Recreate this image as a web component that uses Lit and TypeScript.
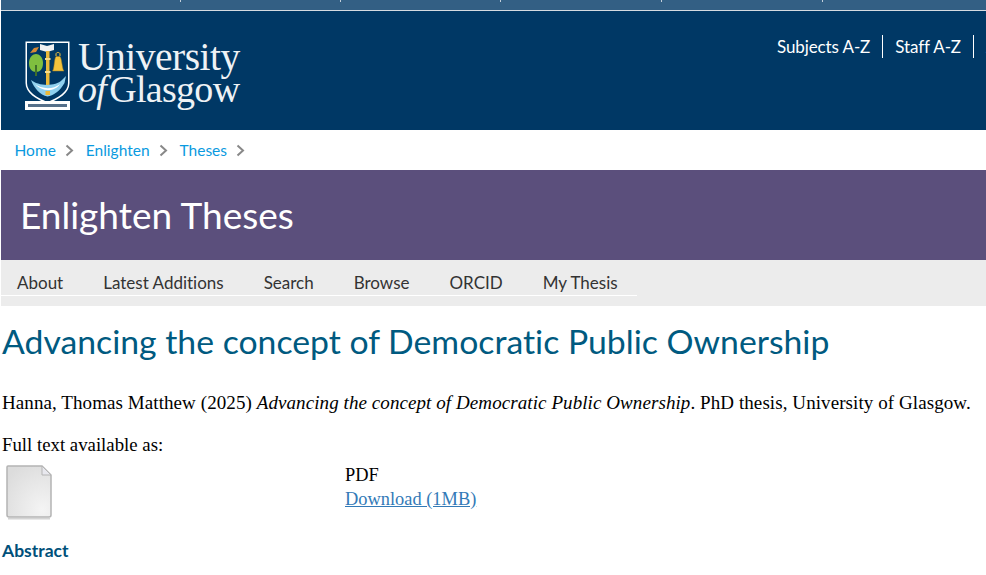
import { LitElement, html, css } from 'lit';
import { customElement } from 'lit/decorators.js';

const crumbs = ['Home', 'Enlighten', 'Theses'];
const navItems = ['About', 'Latest Additions', 'Search', 'Browse', 'ORCID', 'My Thesis'];

@customElement('app-root')
export class AppRoot extends LitElement {
  static styles = css`
    :host {
      display: block;
      height: 575px;
      overflow: hidden;
      background: #fff;
      font-family: 'Liberation Serif', serif;
      color: #000;
    }
    .strip {
      display: grid;
      grid-template-columns: 180px 160px 160px 161px 161px 1fr;
      height: 10px;
      margin-left: 1px;
      background: #335f84;
      border-bottom: 1px solid #d5dbe1;
    }
    .strip span {
      border-right: 1px solid #c3cfda;
      height: 2px;
    }
    .strip span:last-child {
      border-right: none;
    }
    .masthead {
      display: flex;
      justify-content: space-between;
      height: 119px;
      margin-left: 1px;
      background: #003865;
      color: #fff;
    }
    .logo {
      display: flex;
      align-items: flex-start;
      gap: 7px;
      padding: 30px 0 0 24px;
    }
    .wordmark {
      font-size: 39.5px;
      line-height: 33px;
      letter-spacing: -0.5px;
      color: #eef2f5;
    }
    .wordmark .second {
      margin-top: -1px;
      font-size: 38px;
      letter-spacing: -0.7px;
    }
    .wordmark i {
      margin-right: 3px;
    }
    .links {
      display: flex;
      align-items: flex-start;
      flex: none;
      width: 221px;
      padding-top: 24px;
      overflow: hidden;
      font: 17px/23px Lato, sans-serif;
      letter-spacing: -0.1px;
      white-space: nowrap;
    }
    .links span {
      padding: 0 12px;
      border-right: 1px solid #fff;
    }
    .links span:last-child {
      border-right: none;
    }
    .crumbs {
      display: flex;
      align-items: center;
      height: 40px;
      padding-left: 14.500px;
      font: 15.500px Lato, sans-serif;
      color: #0a9ae0;
    }
    .crumbs a {
      display: flex;
      align-items: center;
      gap: 9px;
      margin-right: 12px;
    }
    .crumbs svg {
      width: 9px;
      height: 13px;
    }
    .banner {
      height: 90px;
      margin-left: 1px;
      padding-left: 19px;
      background: #5b4f7c;
      color: #fff;
      font: 37px/90px Lato, sans-serif;
    }
    .nav {
      height: 46px;
      margin-left: 1px;
      background: #ececec;
    }
    .nav ul {
      display: flex;
      gap: 40px;
      box-sizing: border-box;
      width: 636px;
      height: 36px;
      margin: 0;
      padding: 10px 0 0 16px;
      list-style: none;
      border-bottom: 1px solid #fff;
      font: 17px/26px Lato, sans-serif;
      font-variant-ligatures: none;
      color: #333;
      white-space: nowrap;
    }
    h1 {
      margin: 14px 0 0 2px;
      font: 400 33.750px/42px Lato, sans-serif;
      font-variant-ligatures: none;
      color: #005a80;
      white-space: nowrap;
    }
    .citation {
      margin: 28px 0 0 2px;
      font-size: 19px;
      line-height: 26px;
      letter-spacing: 0.08px;
      white-space: nowrap;
    }
    .available {
      margin: 16px 0 0 2px;
      font-size: 18.8px;
      line-height: 26px;
    }
    .doc {
      display: flex;
      margin-top: 6px;
    }
    .thumb {
      flex: none;
      width: 345px;
      padding-left: 5px;
      box-sizing: border-box;
    }
    .thumb svg {
      display: block;
      width: 48px;
      height: 56px;
    }
    .format {
      margin-top: -1px;
      font-size: 18.4px;
      line-height: 24px;
    }
    .format a {
      display: block;
      color: #337ab7;
      text-decoration: underline;
    }
    h2 {
      margin: 19px 0 0 2px;
      font: 700 17.500px/24px Lato, sans-serif;
      color: #00507a;
    }
  `;

  private shield() {
    return html`<svg width="46" height="70" viewBox="0 0 46 70" aria-hidden="true">
      <path d="M0.500 0.500H44.500V42C44.500 52 34 58 22.500 63C11 58 0.500 52 0.500 42Z" fill="#fff" />
      <path d="M2 2H43V42C43 51 33 56.500 22.500 61C12 56.500 2 51 2 42Z" fill="#003865" />
      <path d="M15 3L22 5L29 3V9L22 11L15 9Z" fill="#f2f2f2" />
      <rect x="21" y="10" width="3.500" height="41" fill="#e9b93a" />
      <rect x="20" y="17" width="5.500" height="2" fill="#f4dc8c" />
      <rect x="20" y="30" width="5.500" height="2" fill="#f4dc8c" />
      <path d="M4 22C4 16 8 13 11 13C14 13 18 16 18 22C18 28 15 31 11 31C7 31 4 28 4 22Z" fill="#7fbf3f" />
      <rect x="10" y="24" width="2" height="11" fill="#3f6f2a" />
      <path d="M5 12L9 7L14 6L11 11Z" fill="#d88a33" />
      <path d="M31 15V13C31 12 32 11.500 33 11.500C34 11.500 35 12 35 13V15" fill="none" stroke="#f2c23d" />
      <path d="M27.500 30C29.500 28 29 18 31 15.500H35C37 18 37 28 39 30Z" fill="#f2c23d" stroke="#a8801d" stroke-width="0.500" />
      <path d="M6 39C13 45 30 46 37 39L41 35L39.500 42C35 50 28 55 22.500 55.500C15 54 9 47 6 39Z" fill="#8fd0ee" />
      <path d="M10 43C16 48 28 49 35 43C30 51 17 51 10 43Z" fill="#fff" />
      <rect x="20.500" y="50" width="4.500" height="4" fill="#e9b93a" />
      <rect x="0" y="60" width="45" height="9" fill="#fff" />
      <rect x="3" y="63" width="39" height="3" fill="#55708a" />
    </svg>`;
  }

  render() {
    return html`
      <div class="strip">${[0, 1, 2, 3, 4, 5].map(() => html`<span></span>`)}</div>
      <header class="masthead">
        <div class="logo">
          ${this.shield()}
          <div class="wordmark">
            <div>University</div>
            <div class="second"><i>of</i>Glasgow</div>
          </div>
        </div>
        <div class="links"><span>Subjects A-Z</span><span>Staff A-Z</span><span>A</span></div>
      </header>
      <nav class="crumbs">
        ${crumbs.map(
          (c) => html`<a
            >${c}
            <svg viewBox="0 0 9 13"><path d="M1.500 1.500L7 6.500L1.500 11.500" fill="none" stroke="#888" stroke-width="2" /></svg
          ></a>`,
        )}
      </nav>
      <div class="banner">Enlighten Theses</div>
      <div class="nav">
        <ul>
          ${navItems.map((n) => html`<li>${n}</li>`)}
        </ul>
      </div>
      <h1>Advancing the concept of Democratic Public Ownership</h1>
      <p class="citation">
        Hanna, Thomas Matthew (2025) <i>Advancing the concept of Democratic Public Ownership</i>. PhD thesis, University of
        Glasgow.
      </p>
      <div class="available">Full text available as:</div>
      <div class="doc">
        <div class="thumb">
          <svg viewBox="0 0 48 56" aria-hidden="true">
            <defs>
              <radialGradient id="page" cx="0.8" cy="0.85" r="1">
                <stop offset="0" stop-color="#f4f4f4" />
                <stop offset="1" stop-color="#dcdcdc" />
              </radialGradient>
            </defs>
            <path d="M3 2H37L46 11V51Q46 53 44 53H4Q2 53 2 51V3Q2 2 3 2Z" fill="url(#page)" stroke="#b4b4b4" stroke-width="1.500" />
            <path d="M37 2V11H46Z" fill="#e8e8ee" stroke="#b4b4b4" />
            <rect x="3" y="54" width="42" height="1.500" fill="#d4d4d4" />
          </svg>
        </div>
        <div class="format">PDF<a>Download (1MB)</a></div>
      </div>
      <h2>Abstract</h2>
    `;
  }
}
